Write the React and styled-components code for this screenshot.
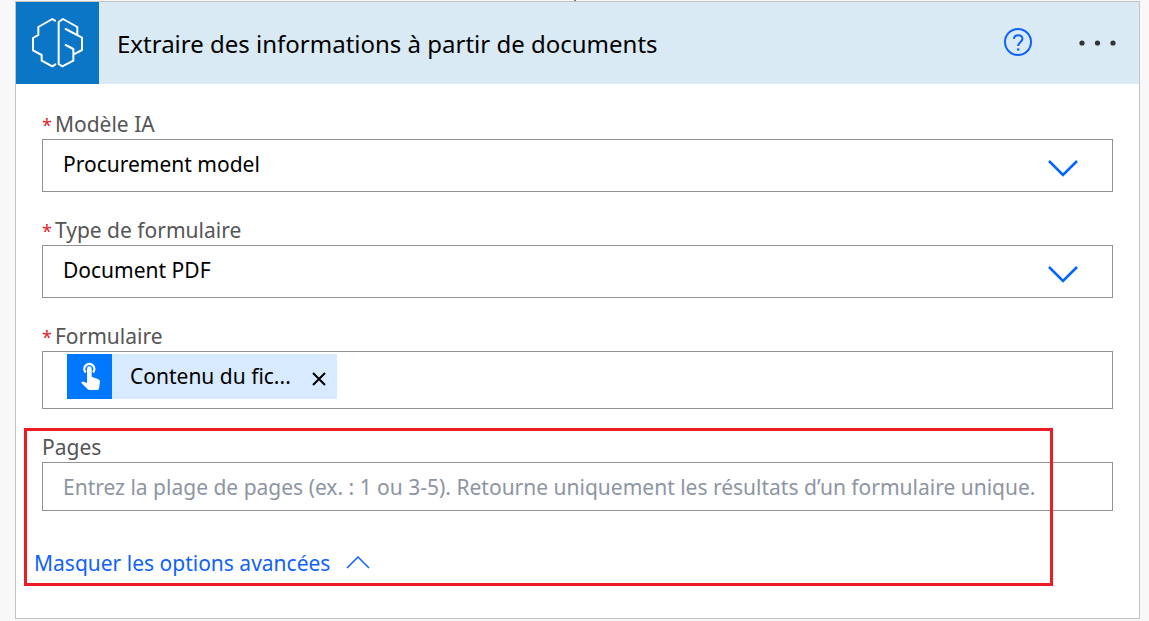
import styled, { createGlobalStyle } from "styled-components";
import { useState } from "react";

const GlobalStyle = createGlobalStyle`
    * {
        box-sizing: border-box;
    }

    body {
        margin: 0;
        background-color: #F8F8F8;
        font-family: "Noto Sans", "Open Sans", sans-serif;
    }
`;

const BrainIcon = () => (
    <svg width="83" height="82" viewBox="48 6 249 246" fill="none" stroke="#FFF" strokeWidth="6" strokeLinejoin="round" strokeLinecap="round" aria-hidden="true">
        <path d="M165 62L157 57L115 81V105L99 114V151L125 165V182L157 199L166 193" />
        <path d="M197 87L246 113V150L220 164M232 104V81L189 57L176 66V192L187 199L220 182V147L197 135" />
    </svg>
);

const TouchIcon = () => (
    <svg width="45" height="45" viewBox="0 0 135 135" aria-hidden="true">
        <path d="M56 55A15 15 0 1 1 78 55" fill="none" stroke="#FFF" strokeWidth="7" />
        <path d="M60 44A7 7 0 0 1 74 44V68L94 76Q99 78 99 83L96 104Q95 108 91 108H67Q64 108 62 106L43 87Q42 85 44 84Q47 82 50 83L60 87Z" fill="#FFF" />
    </svg>
);

const HelpIcon = () => (
    <svg width="30" height="30" viewBox="0 0 30 30" fill="none" stroke="#0F62FE" strokeWidth="2" aria-hidden="true">
        <circle cx="15" cy="14" r="13" />
        <path d="M11 11C11 6 19.5 6.2 19.5 10.5C19.5 14 15.2 14 15.2 18" />
        <circle cx="15.2" cy="21.5" r="1.3" fill="#0F62FE" stroke="none" />
    </svg>
);

const DotsIcon = () => (
    <svg width="38" height="6" viewBox="0 0 38 6" fill="#333" aria-hidden="true">
        <circle cx="3" cy="3" r="2.6" />
        <circle cx="18.5" cy="3" r="2.6" />
        <circle cx="34" cy="3" r="2.6" />
    </svg>
);

const Select = ({ id, label, options }) => (
    <Field>
        <Label htmlFor={id}><Star>*</Star>{label}</Label>
        <SelectBox>
            <SelectInput id={id} required>
                {options.map((option) => <option key={option}>{option}</option>)}
            </SelectInput>
            <Chevron width="30" height="18" viewBox="0 0 30 18" aria-hidden="true">
                <path d="M1 2L15 16L29 2" fill="none" stroke="#0066FF" strokeWidth="2.6" />
            </Chevron>
        </SelectBox>
    </Field>
);

const App = () => {
    const [open, setOpen] = useState(true);
    const [hasToken, setHasToken] = useState(true);

    return (
        <>
            <GlobalStyle />
            <Connector />
            <Card>
                <Header>
                    <Logo><BrainIcon /></Logo>
                    <Title>Extraire des informations à partir de documents</Title>
                    <IconButton type="button" aria-label="Aide"><HelpIcon /></IconButton>
                    <IconButton type="button" aria-label="Menu"><DotsIcon /></IconButton>
                </Header>

                <Body>
                    <Select id="model" label="Modèle IA" options={["Procurement model"]} />
                    <Select id="type" label="Type de formulaire" options={["Document PDF"]} />

                    <Field>
                        <Label htmlFor="form"><Star>*</Star>Formulaire</Label>
                        <TokenBox>
                            {hasToken && (
                                <Token>
                                    <TokenIcon><TouchIcon /></TokenIcon>
                                    <TokenText>Contenu du fic...</TokenText>
                                    <Remove type="button" aria-label="Supprimer" onClick={() => setHasToken(false)}>
                                        <svg width="14" height="14" viewBox="0 0 14 14" aria-hidden="true">
                                            <path d="M1 1L13 13M13 1L1 13" stroke="#000" strokeWidth="2" />
                                        </svg>
                                    </Remove>
                                </Token>
                            )}
                            <TokenInput id="form" type="text" />
                        </TokenBox>
                    </Field>

                    <Advanced>
                        {open && (
                            <Field>
                                <Label htmlFor="pages">Pages</Label>
                                <TextInput
                                    id="pages"
                                    type="text"
                                    placeholder="Entrez la plage de pages (ex. : 1 ou 3-5). Retourne uniquement les résultats d’un formulaire unique."
                                />
                            </Field>
                        )}
                        <Toggle type="button" aria-expanded={open} onClick={() => setOpen(!open)}>
                            Masquer les options avancées
                            <svg width="24" height="14" viewBox="0 0 24 14" aria-hidden="true">
                                <path d="M1 12L12 1L23 12" fill="none" stroke="#0F62FE" strokeWidth="1.5" />
                            </svg>
                        </Toggle>
                        <Highlight />
                    </Advanced>
                </Body>
            </Card>
        </>
    );
}

export default App;

/* tip of the arrow that comes from the previous step */
const Connector = styled.div`
    width: 2px;
    height: 1px;
    margin: 0 auto;
    background-color: #777;
`;

const Card = styled.main`
    margin: 0 9px 0 15px;
    border: 1px solid #C4C4C4;
    background-color: #FFF;
`;

const Header = styled.header`
    display: flex;
    align-items: center;
    padding-right: 22px;
    background-color: #DAEAF4;
`;

const Logo = styled.div`
    display: flex;
    background-color: #0B76C5;
`;

const Title = styled.h1`
    flex: 1;
    margin: 0;
    padding: 2px 0 0 18px;
    color: #000;
    font-size: 24px;
    font-weight: 400;
    line-height: 32px;
`;

const IconButton = styled.button`
    display: flex;
    margin-left: 46px;
    padding: 0;
    border: none;
    background: none;
    cursor: pointer;
`;

const Body = styled.div`
    display: flex;
    flex-direction: column;
    gap: 23px;
    padding: 25px 26px 40px;
`;

const Field = styled.div`
    display: flex;
    flex-direction: column;
`;

const Label = styled.label`
    color: #555;
    font-size: 21px;
    line-height: 30px;
`;

const Star = styled.span`
    margin-right: 3px;
    color: #E3242B;
    font-size: 18px;
    line-height: 1;
`;

const SelectBox = styled.div`
    position: relative;
`;

const SelectInput = styled.select`
    appearance: none;
    display: block;
    width: 100%;
    height: 53px;
    padding: 0 80px 3px 20px;
    border: 1px solid #929292;
    border-radius: 0;
    background-color: #FFF;
    color: #000;
    font-family: inherit;
    font-size: 21px;
`;

const Chevron = styled.svg`
    position: absolute;
    top: 20px;
    right: 35px;
    pointer-events: none;
`;

const TokenBox = styled.div`
    display: flex;
    height: 58px;
    padding: 2px 24px;
    border: 1px solid #929292;
`;

const Token = styled.div`
    display: flex;
    align-items: center;
    height: 45px;
    background-color: #D8EAFF;
`;

const TokenIcon = styled.span`
    display: flex;
    background-color: #0077FF;
`;

const TokenText = styled.span`
    padding: 0 21px 2px 18px;
    font-size: 21px;
    line-height: 30px;
`;

const Remove = styled.button`
    display: flex;
    padding: 4px 11px 0 0;
    border: none;
    background: none;
    cursor: pointer;
`;

const TokenInput = styled.input`
    flex: 1;
    min-width: 0;
    border: none;
    outline: none;
    font-family: inherit;
    font-size: 21px;
`;

const TextInput = styled.input`
    width: 100%;
    height: 49px;
    padding: 0 20px;
    border: 1px solid #929292;
    font-family: inherit;
    font-size: 21px;

    &::placeholder {
        color: #8D95A3;
    }
`;

const Advanced = styled.section`
    position: relative;
    display: flex;
    flex-direction: column;
    align-items: stretch;
    gap: 37px;
`;

const Toggle = styled.button`
    display: flex;
    align-items: center;
    align-self: flex-start;
    gap: 16px;
    margin-left: -8px;
    padding: 0;
    border: none;
    background: none;
    color: #0F62FE;
    font-family: inherit;
    font-size: 21px;
    line-height: 30px;
    cursor: pointer;
`;

/* red outline drawn over the advanced options */
const Highlight = styled.div`
    position: absolute;
    top: -4px;
    right: 60px;
    bottom: -8px;
    left: -18px;
    border: 3px solid #ED1C24;
    pointer-events: none;
`;
